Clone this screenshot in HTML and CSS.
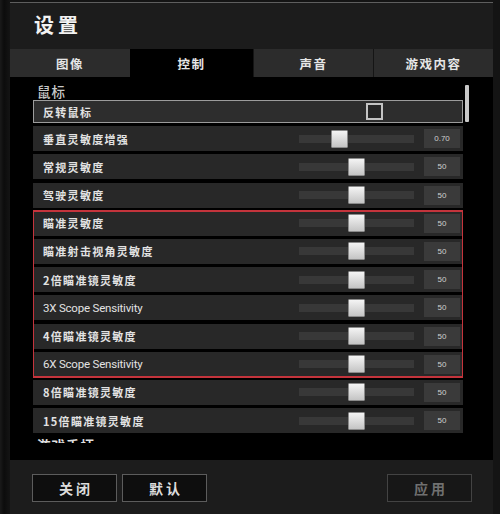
FILE: index.html
```html
<!DOCTYPE html>
<html lang="zh-CN">
<head>
<meta charset="utf-8">
<title>设置</title>
<link rel="stylesheet" href="styles.css">
</head>
<body>
<div class="window">
  <div class="titlebar"><h1 class="title">设置</h1></div>
  <div class="tabs">
    <div class="tab">图像</div>
    <div class="tab active">控制</div>
    <div class="tab">声音</div>
    <div class="tab">游戏内容</div>
  </div>
  <div class="content">
    <div class="scroll">
      <div class="section">鼠标</div>
      <div class="list">
        <div class="row row-check">
          <span class="label">反转鼠标</span>
          <span class="checkbox"></span>
        </div>
        <div class="row">
          <span class="label">垂直灵敏度增强</span>
          <div class="track"><span class="thumb" style="left:32px"></span></div>
          <span class="value">0.70</span>
        </div>
        <div class="row">
          <span class="label">常规灵敏度</span>
          <div class="track"><span class="thumb" style="left:49px"></span></div>
          <span class="value">50</span>
        </div>
        <div class="row">
          <span class="label">驾驶灵敏度</span>
          <div class="track"><span class="thumb" style="left:49px"></span></div>
          <span class="value">50</span>
        </div>
        <div class="group">
          <div class="row">
            <span class="label">瞄准灵敏度</span>
            <div class="track"><span class="thumb" style="left:49px"></span></div>
            <span class="value">50</span>
          </div>
          <div class="row">
            <span class="label">瞄准射击视角灵敏度</span>
            <div class="track"><span class="thumb" style="left:49px"></span></div>
            <span class="value">50</span>
          </div>
          <div class="row">
            <span class="label">2倍瞄准镜灵敏度</span>
            <div class="track"><span class="thumb" style="left:49px"></span></div>
            <span class="value">50</span>
          </div>
          <div class="row">
            <span class="label en">3X Scope Sensitivity</span>
            <div class="track"><span class="thumb" style="left:49px"></span></div>
            <span class="value">50</span>
          </div>
          <div class="row">
            <span class="label">4倍瞄准镜灵敏度</span>
            <div class="track"><span class="thumb" style="left:49px"></span></div>
            <span class="value">50</span>
          </div>
          <div class="row">
            <span class="label en">6X Scope Sensitivity</span>
            <div class="track"><span class="thumb" style="left:49px"></span></div>
            <span class="value">50</span>
          </div>
        </div>
        <div class="row">
          <span class="label">8倍瞄准镜灵敏度</span>
          <div class="track"><span class="thumb" style="left:49px"></span></div>
          <span class="value">50</span>
        </div>
        <div class="row">
          <span class="label">15倍瞄准镜灵敏度</span>
          <div class="track"><span class="thumb" style="left:49px"></span></div>
          <span class="value">50</span>
        </div>
      </div>
      <div class="section section-next">游戏手柄</div>
    </div>
    <div class="scrollbar"></div>
  </div>
  <div class="footer">
    <button class="btn">关闭</button>
    <button class="btn">默认</button>
    <span class="spacer"></span>
    <button class="btn disabled">应用</button>
  </div>
</div>
</body>
</html>
```

FILE: styles.css
```css
* { box-sizing: border-box; }

html, body {
  margin: 0;
  padding: 0;
}

body {
  width: 500px;
  height: 514px;
  overflow: hidden;
  background: linear-gradient(to right, #1a1a1a 0px, #0c0c0c 4px, #141414 10px);
  padding-top: 2px;
  font-family: "Noto Sans CJK SC", "Noto Sans", Roboto, sans-serif;
  color: #dcdcdc;
}

.window {
  margin-left: 10px;
  width: 483px;
  height: 512px;
  background: #1c1c1c;
  border-top: 1px solid #5e5e5e;
  display: flex;
  flex-direction: column;
}

.titlebar {
  height: 46px;
  display: flex;
  align-items: center;
  padding-left: 24px;
  padding-bottom: 3px;
}

.title {
  margin: 0;
  font-size: 20px;
  font-weight: 700;
  letter-spacing: 4px;
  color: #f2f2f2;
  line-height: 1;
}

.tabs {
  height: 28px;
  display: grid;
  grid-template-columns: 120px 123px 120px 1fr;
  gap: 0;
  background: #111;
}

.tab {
  display: flex;
  align-items: center;
  justify-content: center;
  background: #2c2c2c;
  font-size: 12.5px;
  font-weight: 700;
  letter-spacing: 1.5px;
  color: #e6e6e6;
  border-left: 1px solid #151515;
}

.tab:first-child { border-left: none; }

.tab.active {
  background: #000;
  border-left: none;
}

.content {
  position: relative;
  height: 383px;
  background: #000;
  padding: 4px 30px 0 23px;
}

.scroll {
  height: 362px;
  padding-top: 2px;
  overflow: hidden;
}

.section {
  height: 17px;
  padding-left: 4px;
  font-size: 13.5px;
  line-height: 17px;
  letter-spacing: 1px;
  font-weight: 500;
  color: #c8c8c8;
}

.section-next {
  margin-top: 4px;
  color: #e0e0e0;
  font-weight: 700;
}

.list {
  display: flex;
  flex-direction: column;
  gap: 3.2px;
}

.group {
  display: flex;
  flex-direction: column;
  gap: 3.2px;
  outline: 2px solid #c4343c;
  outline-offset: -1px;
}

.row {
  height: 25px;
  display: flex;
  align-items: center;
  padding-left: 10px;
  background: #282828;
}

.row-check {
  height: 23px;
  background: #2d2d2d;
  border: 1px solid #9c9c9c;
  padding-left: 9px;
}

.label {
  flex: 1;
  font-size: 11px;
  font-weight: 700;
  letter-spacing: 1.3px;
  color: #e2e2e2;
  white-space: nowrap;
}

.label.en {
  font-family: Roboto, "Noto Sans", sans-serif;
  font-weight: 400;
  font-size: 11.5px;
  letter-spacing: -0.2px;
}

.checkbox {
  width: 17px;
  height: 17px;
  border: 2px solid #c4c4c4;
  background: #262626;
  margin-right: 79px;
}

.track {
  position: relative;
  width: 115px;
  height: 8px;
  background: #383838;
}

.thumb {
  position: absolute;
  top: -5px;
  width: 17px;
  height: 18px;
  background: linear-gradient(to bottom, #f4f4f4, #c4c4c4);
  border: 1px solid #8a8a8a;
  border-radius: 1px;
}

.value {
  width: 36px;
  height: 19px;
  margin-left: 10px;
  margin-right: 3px;
  background: #3a3a3a;
  display: flex;
  align-items: center;
  justify-content: center;
  font-family: "Liberation Sans", sans-serif;
  font-size: 8px;
  color: #cfcfcf;
}

.scrollbar {
  position: absolute;
  top: 8px;
  left: 455px;
  width: 4px;
  height: 37px;
  background: #c8c8c8;
  border-radius: 1px;
}

.footer {
  flex: 1;
  display: flex;
  align-items: flex-start;
  gap: 5px;
  padding: 14px 21px 0 22px;
  background: #1c1c1c;
}

.spacer { flex: 1; }

.btn {
  width: 85px;
  height: 28px;
  background: #0e0e0e;
  border: 1px solid #5c5c5c;
  color: #dcdcdc;
  font-family: "Noto Sans CJK SC", sans-serif;
  font-size: 14px;
  font-weight: 700;
  letter-spacing: 3px;
  padding: 0 0 0 3px;
  display: flex;
  align-items: center;
  justify-content: center;
}

.btn.disabled {
  background: #171717;
  border-color: #434343;
  color: #707070;
}
```
